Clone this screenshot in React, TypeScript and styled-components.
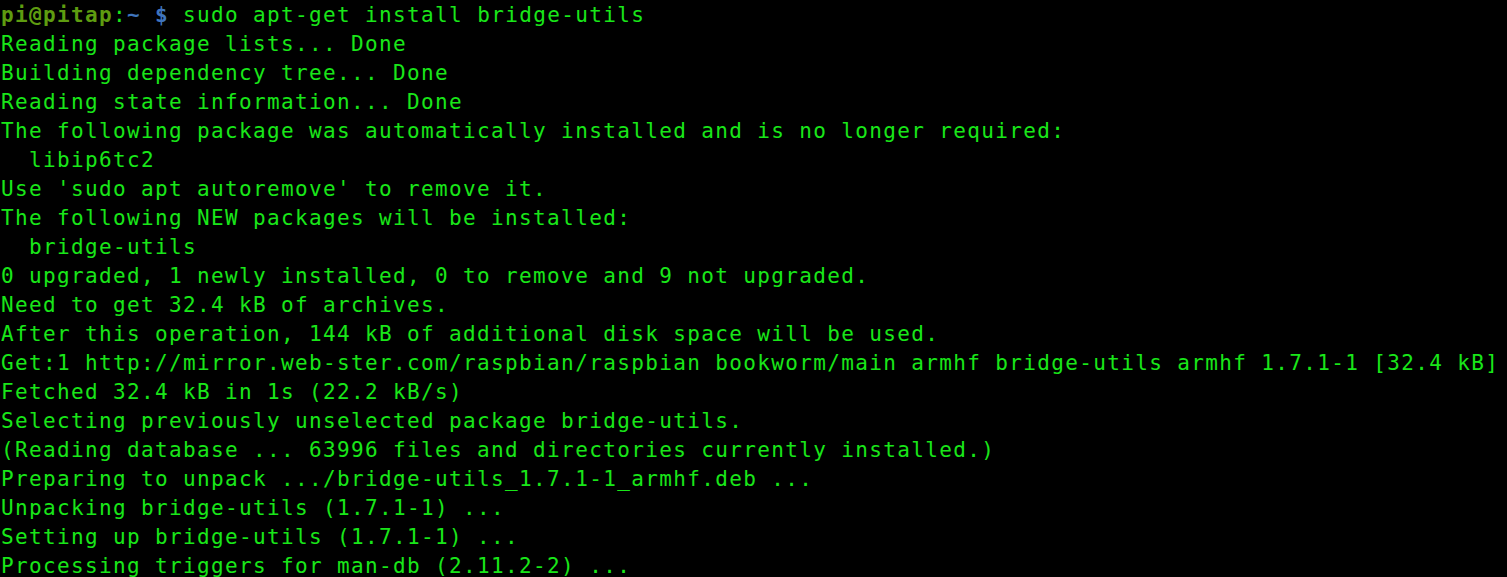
import React from "react";
import styled, { createGlobalStyle } from "styled-components";

const Global = createGlobalStyle`
  html, body {
    margin: 0;
    padding: 0;
    background: #000000;
    overflow: hidden;
  }
`;

const Terminal = styled.div`
  background: #000000;
  width: 1507px;
  height: 577px;
  padding: 1px 0 0 1px;
  box-sizing: border-box;
  font-family: "DejaVu Sans Mono", "Liberation Mono", monospace;
  font-size: 21px;
  letter-spacing: 1.36px;
  line-height: 29px;
  color: #19e619;
  overflow: hidden;
  display: flex;
  flex-direction: column;
`;

const Line = styled.div`
  white-space: pre;
  height: 29px;
  flex-shrink: 0;
`;

const User = styled.span`
  color: #5e9c10;
  font-weight: bold;
`;

const Path = styled.span`
  color: #3f74bd;
  font-weight: bold;
`;

const Colon = styled.span`
  color: #19e619;
`;

const lines = [
  "Reading package lists... Done",
  "Building dependency tree... Done",
  "Reading state information... Done",
  "The following package was automatically installed and is no longer required:",
  "  libip6tc2",
  "Use 'sudo apt autoremove' to remove it.",
  "The following NEW packages will be installed:",
  "  bridge-utils",
  "0 upgraded, 1 newly installed, 0 to remove and 9 not upgraded.",
  "Need to get 32.4 kB of archives.",
  "After this operation, 144 kB of additional disk space will be used.",
  "Get:1 http://mirror.web-ster.com/raspbian/raspbian bookworm/main armhf bridge-utils armhf 1.7.1-1 [32.4 kB]",
  "Fetched 32.4 kB in 1s (22.2 kB/s)",
  "Selecting previously unselected package bridge-utils.",
  "(Reading database ... 63996 files and directories currently installed.)",
  "Preparing to unpack .../bridge-utils_1.7.1-1_armhf.deb ...",
  "Unpacking bridge-utils (1.7.1-1) ...",
  "Setting up bridge-utils (1.7.1-1) ...",
  "Processing triggers for man-db (2.11.2-2) ...",
];

export default function App() {
  return (
    <>
      <Global />
      <Terminal>
        <Line>
          <User>pi@pitap</User>
          <Colon>:</Colon>
          <Path>~ $</Path>
          {" sudo apt-get install bridge-utils"}
        </Line>
        {lines.map((l, i) => (
          <Line key={i}>{l}</Line>
        ))}
      </Terminal>
    </>
  );
}
